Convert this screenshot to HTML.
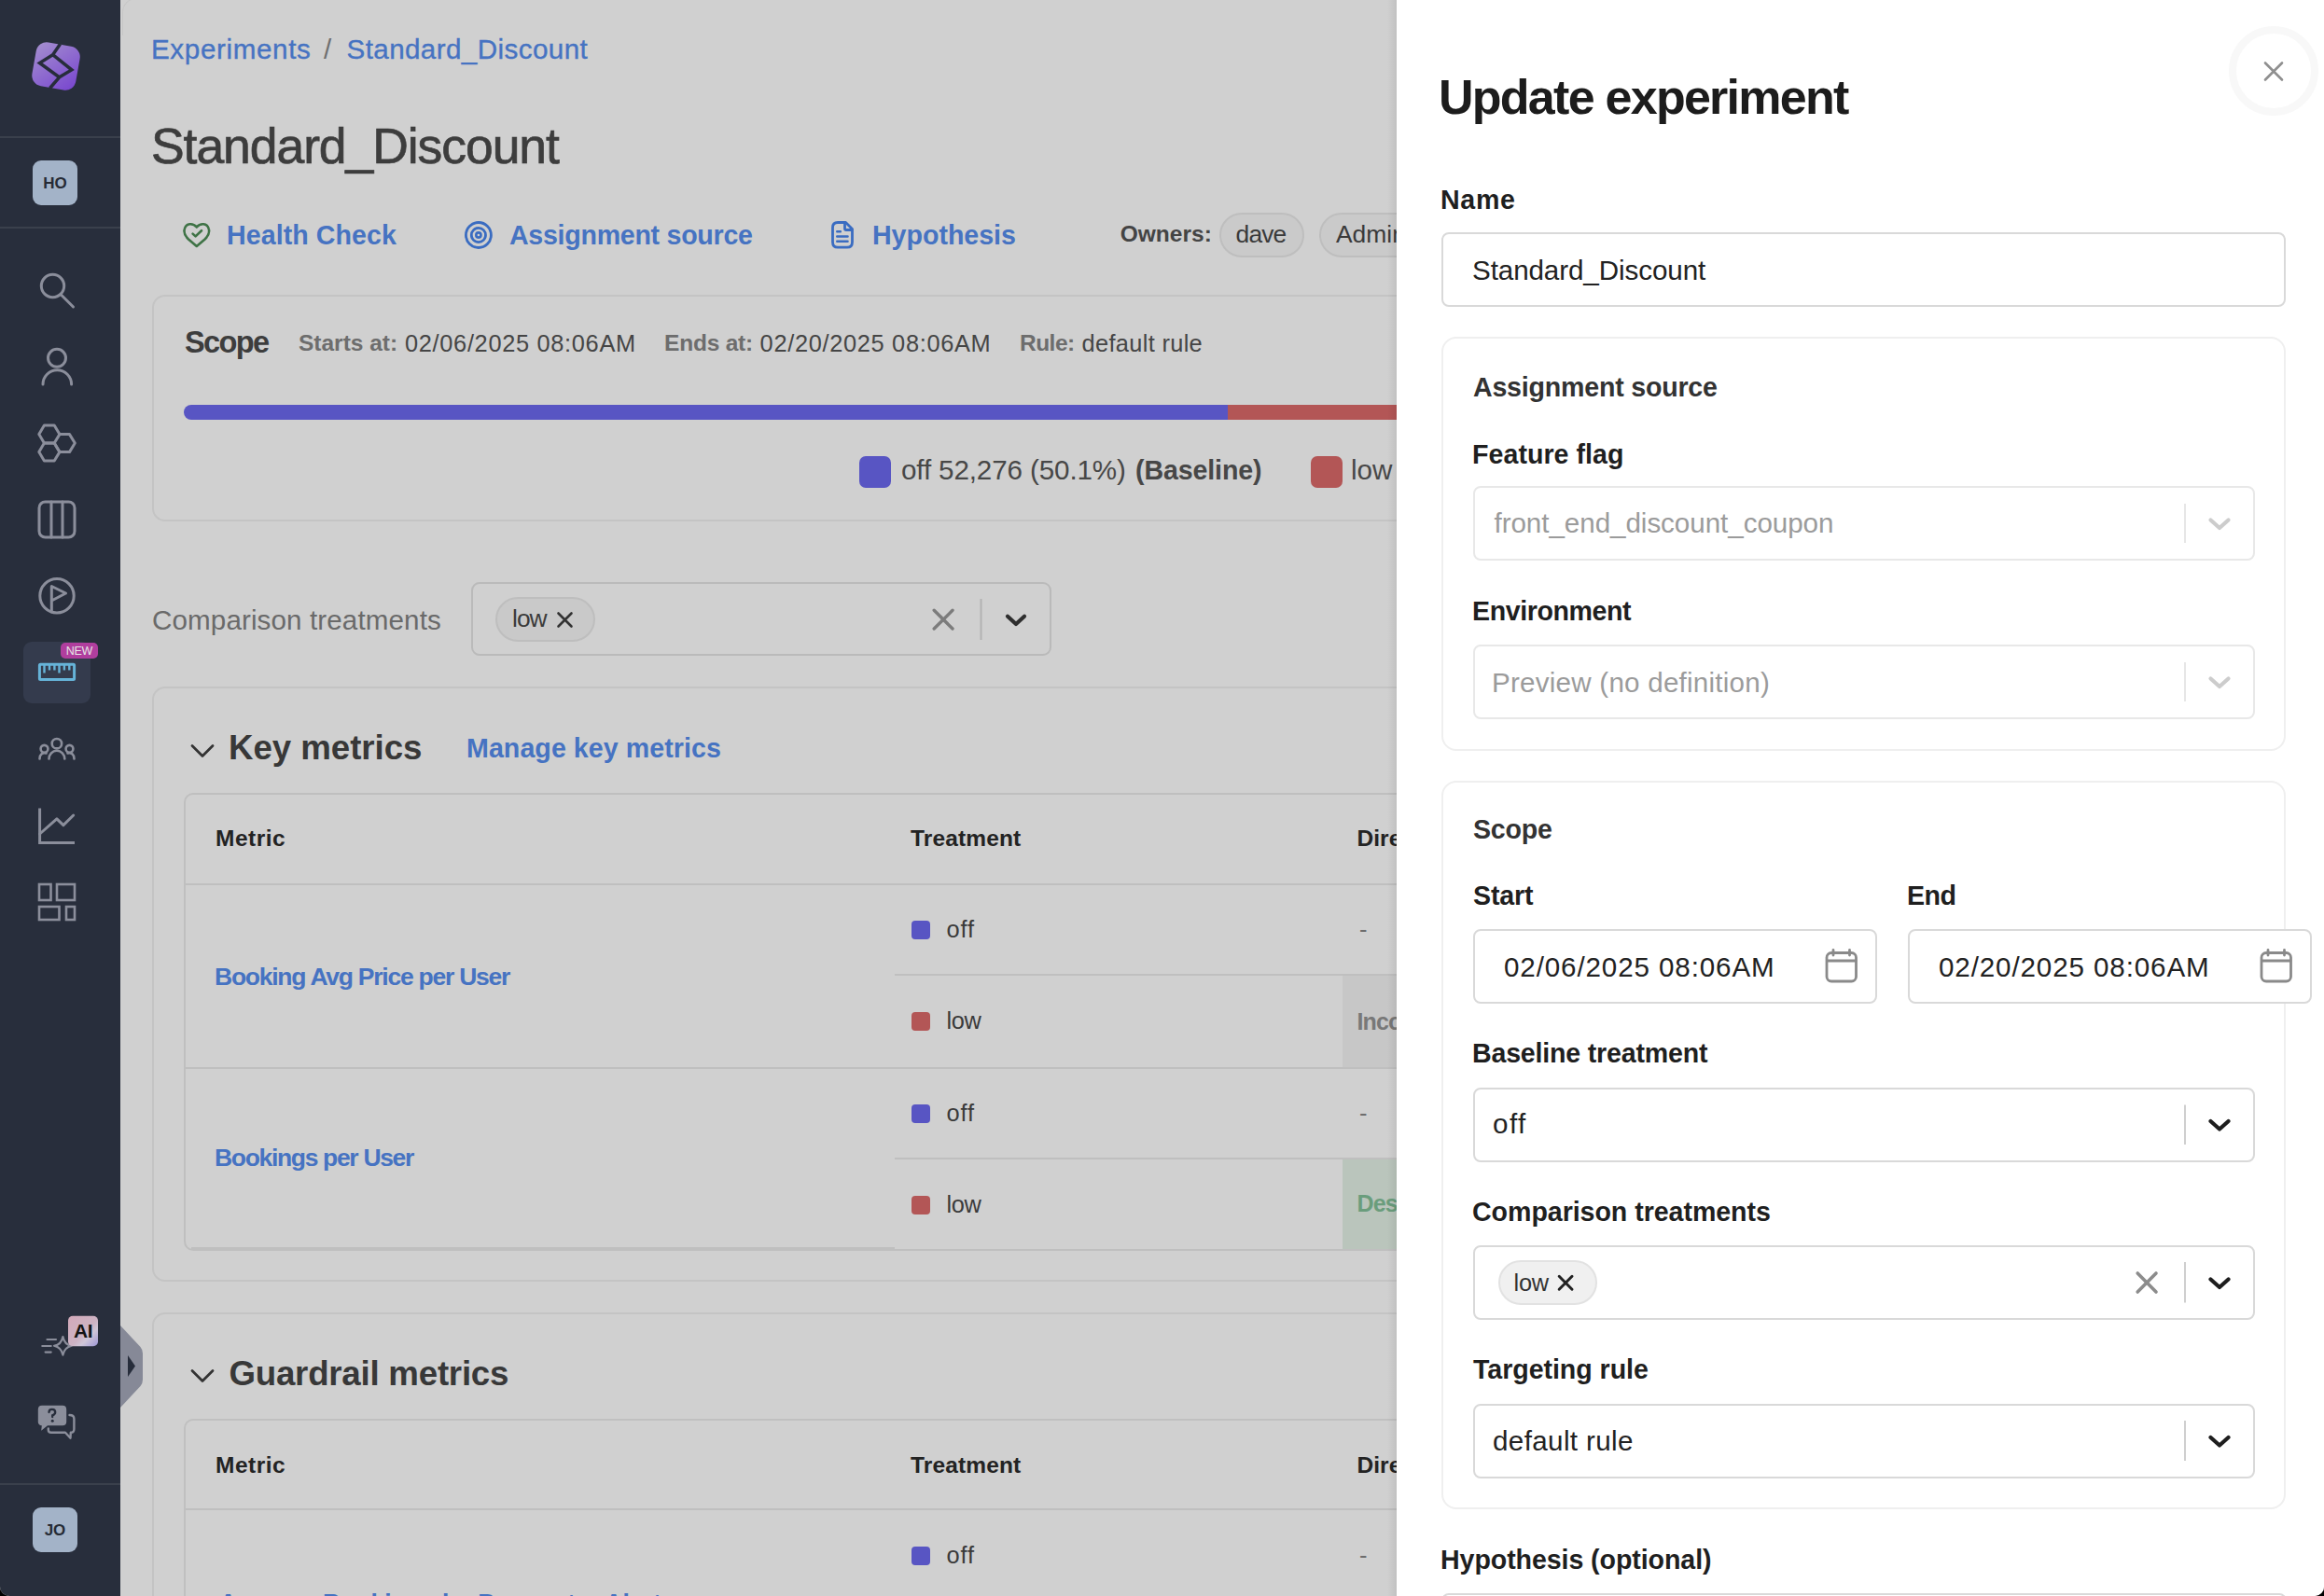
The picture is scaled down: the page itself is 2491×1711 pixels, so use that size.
<!DOCTYPE html>
<html><head><meta charset="utf-8"><title>Update experiment</title>
<style>
*{box-sizing:border-box;margin:0;padding:0}
html,body{width:2491px;height:1711px;overflow:hidden;background:#000;font-family:"Liberation Sans",sans-serif}
#app{position:absolute;left:0;top:0;width:2491px;height:1711px;overflow:hidden;border-radius:0 0 10px 10px;background:#d0d0d0}
.t{position:absolute;line-height:1;white-space:nowrap}
.abs{position:absolute}
#side{position:absolute;left:0;top:0;width:129px;height:1711px;background:#282e3c}
#main{position:absolute;left:129px;top:0;width:1368px;height:1711px;background:#d0d0d0;overflow:hidden}
#drawer{position:absolute;left:1497px;top:0;width:994px;height:1711px;background:#fff}
svg{position:absolute;overflow:visible}
.card{position:absolute;border:2px solid #c4c4c4;border-radius:14px}
.sel{position:absolute;border:2px solid #d9d9d9;border-radius:8px;background:#fff}
.dcard{position:absolute;border:2px solid #efefef;border-radius:16px}
</style></head>
<body><div id="app">
<!-- SIDEBAR -->
<div id="side">
  <div class="abs" style="left:0;top:146px;width:129px;height:2px;background:#3a404c"></div>
  <div class="abs" style="left:0;top:243px;width:129px;height:2px;background:#3a404c"></div>
  <div class="abs" style="left:0;top:1590px;width:129px;height:2px;background:#3a404c"></div>
  <!-- logo -->
  <svg style="left:0;top:0" width="129" height="130" viewBox="0 0 129 130">
    <defs><linearGradient id="lg" x1="0" y1="0" x2="1" y2="1"><stop offset="0" stop-color="#a590cf"/><stop offset="1" stop-color="#7744cf"/></linearGradient></defs>
    <rect x="36.2" y="47.2" width="47.6" height="47.6" rx="11.5" fill="url(#lg)" transform="rotate(10 60 71)"/>
    <path d="M64.5,47.3 L56.6,58.7 L42.5,67.5 L63.6,82.8 L53.5,94.5 M56.6,58.7 L76.8,74.9 L63.6,82.8" fill="none" stroke="#272d3b" stroke-width="3.5" stroke-linejoin="miter"/>
  </svg>
  <!-- HO -->
  <div class="abs" style="left:35px;top:172px;width:48px;height:48px;border-radius:9px;background:#a3b3c8"></div>
  <div class="t" style="left:35px;top:187.5px;width:48px;text-align:center;font-size:17px;font-weight:700;color:#262b35">HO</div>
  <!-- icons -->
  <svg style="left:0;top:0" width="129" height="1000" viewBox="0 0 129 1000" fill="none" stroke="#8b8e9b" stroke-width="3" stroke-linecap="round" stroke-linejoin="round">
    <circle cx="56.5" cy="306.5" r="12.2"/>
    <path d="M65.5,316 L78.5,329"/>
    <circle cx="61" cy="383.8" r="9.5"/>
    <path d="M46,412 A15.3,15.3 0 0 1 76.6,412"/>
    <path d="M47.4,456 L58.2,456 L63.9,465.6 L58.2,475 L47.4,475 L41.8,465.6 Z"/>
    <path d="M47.4,475 L58.2,475 L63.9,484.6 L58.2,494 L47.4,494 L41.8,484.6 Z"/>
    <path d="M63.9,465.6 L74.5,465.6 L80.3,475 L74.5,484.6 L63.9,484.6 L58.2,475"/>
    <rect x="42" y="538" width="38" height="38" rx="6.5"/>
    <path d="M55,538 V576 M67,538 V576"/>
    <circle cx="61" cy="638.8" r="18.2"/>
    <path d="M55.3,656 V628.5 L70.5,636 L55.3,644"/>
    <circle cx="60.9" cy="797.2" r="5.2" stroke-width="2.6"/>
    <path d="M52.5,813.5 A8.4,8.8 0 0 1 69.3,813.5" stroke-width="2.6"/>
    <circle cx="47.5" cy="802.8" r="3.9" stroke-width="2.6"/>
    <path d="M42.5,813.5 A5.2,6 0 0 1 49.5,807.5" stroke-width="2.6"/>
    <circle cx="74.5" cy="802.8" r="3.9" stroke-width="2.6"/>
    <path d="M79.5,813.5 A5.2,6 0 0 0 72.5,807.5" stroke-width="2.6"/>
    <path d="M42.6,866.5 V903.6 H80" stroke-linecap="butt" stroke-linejoin="miter"/>
    <path d="M42.6,894 L60.9,877.8 L67.9,884.6 L78.7,874"/>
    <rect x="42" y="948" width="12.5" height="17" stroke-width="2.6" stroke-linejoin="miter"/>
    <rect x="61" y="948" width="19" height="17" stroke-width="2.6" stroke-linejoin="miter"/>
    <rect x="42" y="972" width="21.5" height="14" stroke-width="2.6" stroke-linejoin="miter"/>
    <rect x="71" y="972" width="9" height="14" stroke-width="2.6" stroke-linejoin="miter"/>
  </svg>
  <!-- active ruler item -->
  <div class="abs" style="left:25px;top:688px;width:72px;height:66px;border-radius:9px;background:#343b4d"></div>
  <svg style="left:0;top:0" width="129" height="800" viewBox="0 0 129 800" fill="none" stroke="#66b3d8" stroke-width="3">
    <rect x="42.4" y="712.2" width="37.2" height="16.2" rx="1"/>
    <path d="M47.5,713 V721.5 M53,713 V718.5 M58.4,713 V718.5 M63.5,713 V721.5 M68.9,713 V718.5 M74.3,713 V718.5" stroke-width="2.4"/>
  </svg>
  <div class="abs" style="left:65px;top:689px;width:40px;height:16.5px;border-radius:5px;background:#b03e9e"></div>
  <div class="t" style="left:65px;top:691.5px;width:40px;text-align:center;font-size:12.5px;color:#e6e6e6;letter-spacing:-0.3px">NEW</div>
  <!-- AI -->
  <svg style="left:0;top:1400px" width="129" height="160" viewBox="0 1400 129 160" fill="none" stroke="#8b8e9b" stroke-width="2.2" stroke-linecap="round">
    <defs><linearGradient id="aig" x1="0" y1="0" x2="1" y2="1"><stop offset="0" stop-color="#d3a9b9"/><stop offset="0.55" stop-color="#cdb3c4"/><stop offset="0.7" stop-color="#cfc6d8"/><stop offset="1" stop-color="#9d96d6"/></linearGradient></defs>
    <path d="M50.5,1436 H60 M45.3,1443 H54.7 M48.6,1449.6 H54.7"/>
    <path d="M67.4,1433 Q69,1441.5 76.8,1442.8 Q69,1444.5 67.4,1452.6 Q65.8,1444.5 58,1442.8 Q65.8,1441.5 67.4,1433 Z" stroke-linejoin="round"/>
    <rect x="73" y="1410.8" width="32" height="32.4" rx="5" fill="url(#aig)" stroke="none"/>
    <path d="M40.8,1511 Q40.8,1506.7 45,1506.7 H67 Q71.2,1506.7 71.2,1511 V1524 Q71.2,1528.3 67,1528.3 H51 L44.2,1533.8 L44.8,1528.3 Q40.8,1528 40.8,1524 Z" fill="#8b8e9b" stroke="none"/>
    <path d="M74.5,1517 Q79.4,1517 79.4,1521 V1532 Q79.4,1535.8 75.8,1535.8 L75.5,1541.8 L70,1535.8 H55 Q51.8,1535.8 51.8,1533 V1531.5" stroke-width="2.4" stroke-linejoin="round"/>
    <path d="M52.5,1514 Q52.5,1510.8 55.8,1510.8 Q59.2,1510.8 59.2,1514 Q59.2,1516.2 56.2,1517.4 V1519" stroke="#272d3b" stroke-width="2.3"/>
    <circle cx="56.2" cy="1523.2" r="1.5" fill="#272d3b" stroke="none"/>
  </svg>
  <div class="t" style="left:73px;top:1416px;width:32px;text-align:center;font-size:21px;font-weight:700;color:#141414;letter-spacing:-0.5px">AI</div>
  <!-- JO -->
  <div class="abs" style="left:35px;top:1616px;width:48px;height:48px;border-radius:9px;background:#a3b3c8"></div>
  <div class="t" style="left:35px;top:1631.5px;width:48px;text-align:center;font-size:17px;font-weight:700;color:#262b35">JO</div>
</div>


<div id="main">
<div class="abs" style="left:0;top:0;width:1368px;height:1711px">
  <div class="abs" style="left:2px;top:-2px;width:40px;height:40px;border-left:1px solid #c6c6c6;border-top:1px solid #c6c6c6;border-top-left-radius:15px"></div>
</div>
</div>
<div class="abs" style="left:0;top:0;width:1497px;height:1711px;overflow:hidden">
<div class="t" id="bc1" style="left:162.00px;top:37.94px;font-size:29.6px;font-weight:400;color:#4673c2;letter-spacing:0.633px;-webkit-text-stroke:0.35px">Experiments</div>
<div class="t" id="bc2" style="left:347.00px;top:37.94px;font-size:29.6px;font-weight:400;color:#6f6f6f;letter-spacing:0.000px;">/</div>
<div class="t" id="bc3" style="left:371.50px;top:37.94px;font-size:29.6px;font-weight:400;color:#4673c2;letter-spacing:0.407px;-webkit-text-stroke:0.35px">Standard_Discount</div>
<div class="t" id="title" style="left:162.00px;top:129.71px;font-size:53.5px;font-weight:400;color:#3d3d3d;letter-spacing:-1.073px;-webkit-text-stroke:0.7px">Standard_Discount</div>
<div class="t" id="hc" style="left:243.00px;top:237.79px;font-size:28.6px;font-weight:700;color:#4673c2;letter-spacing:0.068px;">Health Check</div>
<div class="t" id="as" style="left:546.00px;top:237.79px;font-size:28.6px;font-weight:700;color:#4673c2;letter-spacing:-0.278px;">Assignment source</div>
<div class="t" id="hy" style="left:935.00px;top:237.79px;font-size:28.6px;font-weight:700;color:#4673c2;letter-spacing:-0.025px;">Hypothesis</div>
<div class="t" id="own" style="left:1200.70px;top:239.26px;font-size:24.5px;font-weight:700;color:#444444;letter-spacing:0.022px;">Owners:</div>
<!-- pills -->
<div class="abs" style="left:1307px;top:228px;width:91px;height:48px;border-radius:24px;border:2px solid #bebebe;background:#cacaca"></div>
<div class="abs" style="left:1414px;top:228px;width:120px;height:48px;border-radius:24px;border:2px solid #bebebe;background:#cacaca"></div>
<div class="t" id="dave" style="left:1324.60px;top:237.65px;font-size:26.4px;font-weight:400;color:#3a3a3a;letter-spacing:-0.850px;">dave</div>
<div class="t" id="admin" style="left:1432.00px;top:237.65px;font-size:26.4px;font-weight:400;color:#3a3a3a;letter-spacing:0.000px;">Admin</div>
<!-- header icons -->
<svg style="left:0;top:0" width="1000" height="300" viewBox="0 0 1000 300" fill="none" stroke-linecap="round" stroke-linejoin="round">
  <path d="M210.8,243.5 C207,239 199.5,238.8 197.8,245.5 C196.5,250 199,253.5 202,256.5 L210.8,264 L219.6,256.5 C222.6,253.5 225.1,250 223.8,245.5 C222.1,238.8 214.6,239 210.8,243.5 Z" stroke="#3f7346" stroke-width="2.6"/>
  <path d="M206.6,250.6 L209.6,253.4 L216,247.2" stroke="#3f7346" stroke-width="2.6"/>
  <circle cx="512.9" cy="252" r="13.5" stroke="#3a6cc1" stroke-width="2.8"/>
  <circle cx="512.9" cy="252" r="7.6" stroke="#3a6cc1" stroke-width="2.8"/>
  <circle cx="512.9" cy="252" r="2.6" stroke="#3a6cc1" stroke-width="2.6"/>
  <path d="M906.5,238.5 H898 Q892.5,238.5 892.5,244 V259.5 Q892.5,265.2 898,265.2 H908 Q913.5,265.2 913.5,259.5 V245.5 Z" stroke="#3a6cc1" stroke-width="2.8"/>
  <path d="M905.5,239 V245 Q905.5,246.5 907,246.5 H913" stroke="#3a6cc1" stroke-width="2.8"/>
  <path d="M897.3,248.2 H900.8 M897.3,253.5 H908.5 M897.3,258.8 H908.5" stroke="#3a6cc1" stroke-width="2.6"/>
</svg>
<!-- scope card -->
<div class="card" style="left:163px;top:316px;width:1500px;height:243px"></div>
<div class="t" id="sc" style="left:198.00px;top:351.40px;font-size:32.6px;font-weight:700;color:#3d3d3d;letter-spacing:-1.662px;">Scope</div>
<div class="t" id="sa" style="left:320.00px;top:356.26px;font-size:24.5px;font-weight:700;color:#6d6d6d;letter-spacing:-0.004px;">Starts at:</div>
<div class="t" id="sad" style="left:434.00px;top:355.50px;font-size:25.4px;font-weight:400;color:#454545;letter-spacing:0.670px;">02/06/2025 08:06AM</div>
<div class="t" id="ea" style="left:712.00px;top:356.26px;font-size:24.5px;font-weight:700;color:#6d6d6d;letter-spacing:-0.213px;">Ends at:</div>
<div class="t" id="ead" style="left:814.60px;top:355.50px;font-size:25.4px;font-weight:400;color:#454545;letter-spacing:0.670px;">02/20/2025 08:06AM</div>
<div class="t" id="ru" style="left:1093.00px;top:356.26px;font-size:24.5px;font-weight:700;color:#6d6d6d;letter-spacing:-0.523px;">Rule:</div>
<div class="t" id="rud" style="left:1159.60px;top:355.50px;font-size:25.4px;font-weight:400;color:#454545;letter-spacing:0.318px;">default rule</div>
<div class="abs" style="left:197px;top:434px;width:1119px;height:16px;border-radius:8px 0 0 8px;background:#5855c3"></div><div class="abs" style="left:1316px;top:434px;width:300px;height:16px;background:#b35656"></div>
<div class="abs" style="left:921px;top:489px;width:34px;height:34px;border-radius:7px;background:#5855c3"></div>
<div class="abs" style="left:1405px;top:489px;width:34px;height:34px;border-radius:7px;background:#b35656"></div>
<div class="t" id="lg1" style="left:966.00px;top:488.94px;font-size:29.6px;font-weight:400;color:#474747;letter-spacing:-0.123px;">off 52,276 (50.1%)</div>
<div class="t" id="lg2" style="left:1217.00px;top:489.79px;font-size:28.6px;font-weight:700;color:#474747;letter-spacing:-0.126px;">(Baseline)</div>
<div class="t" id="lg3" style="left:1448.00px;top:488.94px;font-size:29.6px;font-weight:400;color:#474747;letter-spacing:0.000px;">low</div>
<!-- comparison -->
<div class="t" id="ct" style="left:163.00px;top:649.94px;font-size:29.6px;font-weight:400;color:#6a6a6a;letter-spacing:0.111px;">Comparison treatments</div>
<div class="abs" style="left:505px;top:624px;width:622px;height:79px;border:2px solid #bababa;border-radius:9px"></div>
<div class="abs" style="left:531px;top:640px;width:107px;height:48px;border:2px solid #bebebe;border-radius:24px;background:#c9c9c9"></div>
<div class="t" id="ctchip" style="left:549.00px;top:649.65px;font-size:26.4px;font-weight:400;color:#3a3a3a;letter-spacing:-0.970px;">low</div>
<svg style="left:0;top:0" width="1200" height="720" viewBox="0 0 1200 720" fill="none" stroke-linecap="round">
  <path d="M598.5,657.5 L612.5,671.5 M612.5,657.5 L598.5,671.5" stroke="#333" stroke-width="2.6"/>
  <path d="M1001.2,654.3 L1021,674 M1021,654.3 L1001.2,674" stroke="#7c7c7c" stroke-width="3.4"/>
  <path d="M1051.5,642 V686" stroke="#b3b3b3" stroke-width="2" stroke-linecap="butt"/>
  <path d="M1080,660.7 L1089,669 L1098,660.7" stroke="#2e2e2e" stroke-width="4.2" stroke-linejoin="round"/>
</svg>
<!-- key metrics card -->
<div class="card" style="left:163px;top:736px;width:1500px;height:638px"></div>
<svg style="left:0;top:0" width="600" height="1500" viewBox="0 0 600 1500" fill="none" stroke="#333" stroke-width="2.8" stroke-linecap="round" stroke-linejoin="round">
  <path d="M206,799.5 L217,810.5 L228,799.5"/>
  <path d="M206,1469.5 L217,1480.5 L228,1469.5"/>
</svg>
<div class="t" id="km" style="left:245.00px;top:783.93px;font-size:36.7px;font-weight:700;color:#383838;letter-spacing:-0.061px;">Key metrics</div>
<div class="t" id="mkm" style="left:500.00px;top:787.79px;font-size:28.6px;font-weight:700;color:#4673c2;letter-spacing:0.066px;">Manage key metrics</div>
<div class="abs" style="left:197px;top:850px;width:1400px;height:491px;border:2px solid #bfbfbf;border-radius:10px"></div><div class="abs" style="left:205px;top:1337px;width:754px;height:2px;background:#bfbfbf"></div>
<div class="abs" style="left:199px;top:947px;width:1300px;height:2px;background:#bfbfbf"></div>
<div class="abs" style="left:1439px;top:1046px;width:60px;height:98px;background:#c7c7c7"></div>
<div class="abs" style="left:1439px;top:1243px;width:60px;height:96px;background:#bac5bc"></div>
<div class="abs" style="left:959px;top:1044px;width:540px;height:2px;background:#bfbfbf"></div>
<div class="abs" style="left:199px;top:1144px;width:1300px;height:2px;background:#bfbfbf"></div>
<div class="abs" style="left:959px;top:1241px;width:540px;height:2px;background:#bfbfbf"></div>
<div class="t" id="th1" style="left:231.00px;top:887.26px;font-size:24.5px;font-weight:700;color:#232323;letter-spacing:0.493px;">Metric</div>
<div class="t" id="th2" style="left:976.00px;top:887.26px;font-size:24.5px;font-weight:700;color:#232323;letter-spacing:0.133px;">Treatment</div>
<div class="t" id="th3" style="left:1454.60px;top:887.26px;font-size:24.5px;font-weight:700;color:#232323;letter-spacing:0.000px;">Direction</div>
<div class="t" id="r1off" style="left:1014.60px;top:983.50px;font-size:25.4px;font-weight:400;color:#3a3a3a;letter-spacing:0.842px;">off</div>
<div class="t" id="r1d" style="left:1457.00px;top:983.50px;font-size:25.4px;font-weight:400;color:#6d6d6d;letter-spacing:0.000px;">-</div>
<div class="t" id="r1low" style="left:1014.60px;top:1081.50px;font-size:25.4px;font-weight:400;color:#3a3a3a;letter-spacing:-0.381px;">low</div>
<div class="t" id="r1inc" style="left:1454.40px;top:1082.84px;font-size:25px;font-weight:700;color:#787878;letter-spacing:0.000px;letter-spacing:-0.8px">Inconclusive</div>
<div class="t" id="m1" style="left:230.00px;top:1033.57px;font-size:26.5px;font-weight:700;color:#4673c2;letter-spacing:-1.248px;">Booking Avg Price per User</div>
<div class="t" id="r2off" style="left:1014.60px;top:1180.50px;font-size:25.4px;font-weight:400;color:#3a3a3a;letter-spacing:0.842px;">off</div>
<div class="t" id="r2d" style="left:1457.00px;top:1180.50px;font-size:25.4px;font-weight:400;color:#6d6d6d;letter-spacing:0.000px;">-</div>
<div class="t" id="r2low" style="left:1014.60px;top:1278.50px;font-size:25.4px;font-weight:400;color:#3a3a3a;letter-spacing:-0.381px;">low</div>
<div class="t" id="r2des" style="left:1454.40px;top:1277.84px;font-size:25px;font-weight:700;color:#6a9d7c;letter-spacing:0.000px;letter-spacing:-0.8px">Desired</div>
<div class="t" id="m2" style="left:230.00px;top:1228.17px;font-size:26.5px;font-weight:700;color:#4673c2;letter-spacing:-1.331px;">Bookings per User</div>
<div class="abs" style="left:977px;top:987px;width:20px;height:20px;border-radius:4px;background:#5855c3"></div>
<div class="abs" style="left:977px;top:1085px;width:20px;height:20px;border-radius:4px;background:#b35656"></div>
<div class="abs" style="left:977px;top:1184px;width:20px;height:20px;border-radius:4px;background:#5855c3"></div>
<div class="abs" style="left:977px;top:1282px;width:20px;height:20px;border-radius:4px;background:#b35656"></div>
<!-- guardrail card -->
<div class="card" style="left:163px;top:1407px;width:1500px;height:600px"></div>
<div class="t" id="gm" style="left:245.50px;top:1454.93px;font-size:36.7px;font-weight:700;color:#383838;letter-spacing:-0.245px;">Guardrail metrics</div>
<div class="abs" style="left:197px;top:1521px;width:1400px;height:400px;border:2px solid #c0c0c0;border-radius:10px"></div>
<div class="abs" style="left:199px;top:1617px;width:1300px;height:2px;background:#bfbfbf"></div>
<div class="t" id="gth1" style="left:231.00px;top:1559.26px;font-size:24.5px;font-weight:700;color:#232323;letter-spacing:0.493px;">Metric</div>
<div class="t" id="gth2" style="left:976.00px;top:1559.26px;font-size:24.5px;font-weight:700;color:#232323;letter-spacing:0.133px;">Treatment</div>
<div class="t" id="gth3" style="left:1454.60px;top:1559.26px;font-size:24.5px;font-weight:700;color:#232323;letter-spacing:0.000px;">Direction</div>
<div class="t" id="g1off" style="left:1014.60px;top:1654.50px;font-size:25.4px;font-weight:400;color:#3a3a3a;letter-spacing:0.842px;">off</div>
<div class="t" id="g1d" style="left:1457.00px;top:1654.50px;font-size:25.4px;font-weight:400;color:#6d6d6d;letter-spacing:0.000px;">-</div>
<div class="t" id="g1m" style="left:235.00px;top:1704.57px;font-size:26.5px;font-weight:700;color:#4673c2;letter-spacing:0.000px;">Average Bookings by Parameter Alert</div>
<div class="abs" style="left:977px;top:1658px;width:20px;height:20px;border-radius:4px;background:#5855c3"></div>
</div>


<!-- collapse tab -->
<svg style="left:129px;top:1421px" width="26" height="90" viewBox="0 0 26 90">
  <path d="M0,0 L21.5,23 Q24,26 24,30 V58 Q24,62 21.5,65 L0,88 Z" fill="#868997"/>
  <path d="M8,32 L16,43.5 L8,55 Z" fill="#272d3b"/>
</svg>
<div id="drawer">
  <div class="abs" style="left:-10px;top:0;width:10px;height:1711px;background:linear-gradient(to right,rgba(0,0,0,0),rgba(0,0,0,0.07))"></div>
</div>
<div class="abs" style="left:1497px;top:0;width:994px;height:1711px;overflow:hidden">
<div class="abs" style="left:-1497px;top:0;width:2491px;height:1711px">
  <!-- close -->
  <div class="abs" style="left:2389px;top:28px;width:96px;height:96px;border-radius:50%;border:8px solid #f8f8f8"></div>
  <svg style="left:0;top:0" width="2491" height="1711" viewBox="0 0 2491 1711" fill="none" stroke-linecap="round" stroke-linejoin="round">
    <path d="M2428,67.5 L2446,85.5 M2446,67.5 L2428,85.5" stroke="#8f8f8f" stroke-width="2.6"/>
  </svg>
  <div class="t" id="ue" style="left:1542.00px;top:77.98px;font-size:52.0px;font-weight:700;color:#1c1c1c;letter-spacing:-1.738px;">Update experiment</div>
<div class="t" id="nm" style="left:1544.00px;top:199.79px;font-size:28.6px;font-weight:700;color:#1f1f1f;letter-spacing:0.675px;">Name</div>
  <div class="sel" style="left:1545px;top:249px;width:905px;height:80px"></div>
  <div class="t" id="nmv" style="left:1578.00px;top:274.94px;font-size:29.6px;font-weight:400;color:#222222;letter-spacing:-0.093px;">Standard_Discount</div>
  <!-- assignment card -->
  <div class="dcard" style="left:1545px;top:361px;width:905px;height:444px"></div>
  <div class="t" id="asl" style="left:1579.00px;top:400.79px;font-size:28.6px;font-weight:700;color:#333333;letter-spacing:-0.216px;">Assignment source</div>
<div class="t" id="ff" style="left:1578.00px;top:472.79px;font-size:28.6px;font-weight:700;color:#1f1f1f;letter-spacing:0.036px;">Feature flag</div>
<div class="t" id="env" style="left:1578.00px;top:640.79px;font-size:28.6px;font-weight:700;color:#1f1f1f;letter-spacing:-0.424px;">Environment</div>
  <div class="sel" style="left:1579px;top:521px;width:838px;height:80px;border-color:#e8e8e8"></div>
  <div class="sel" style="left:1579px;top:691px;width:838px;height:80px;border-color:#e8e8e8"></div>
  <div class="t" id="ffv" style="left:1601.50px;top:545.94px;font-size:29.6px;font-weight:400;color:#9b9b9b;letter-spacing:-0.055px;">front_end_discount_coupon</div>
<div class="t" id="envv" style="left:1599.00px;top:716.94px;font-size:29.6px;font-weight:400;color:#9b9b9b;letter-spacing:0.230px;">Preview (no definition)</div>
  <!-- scope card -->
  <div class="dcard" style="left:1545px;top:837px;width:905px;height:781px"></div>
  <div class="t" id="dsc" style="left:1579.00px;top:875.19px;font-size:28.6px;font-weight:700;color:#333333;letter-spacing:-0.227px;">Scope</div>
<div class="t" id="st" style="left:1579.00px;top:945.79px;font-size:28.6px;font-weight:700;color:#1f1f1f;letter-spacing:-0.156px;">Start</div>
<div class="t" id="en" style="left:2044.00px;top:945.79px;font-size:28.6px;font-weight:700;color:#1f1f1f;letter-spacing:-0.569px;">End</div>
  <div class="sel" style="left:1579px;top:996px;width:433px;height:80px"></div>
  <div class="sel" style="left:2045px;top:996px;width:433px;height:80px"></div>
  <div class="t" id="std" style="left:1612.00px;top:1021.94px;font-size:29.6px;font-weight:400;color:#222222;letter-spacing:0.875px;">02/06/2025 08:06AM</div>
<div class="t" id="end" style="left:2078.00px;top:1021.94px;font-size:29.6px;font-weight:400;color:#222222;letter-spacing:0.875px;">02/20/2025 08:06AM</div>
  <div class="t" id="bt" style="left:1578.00px;top:1115.49px;font-size:28.6px;font-weight:700;color:#1f1f1f;letter-spacing:-0.196px;">Baseline treatment</div>
  <div class="sel" style="left:1579px;top:1166px;width:838px;height:80px"></div>
  <div class="t" id="btv" style="left:1600.00px;top:1189.94px;font-size:29.6px;font-weight:400;color:#222222;letter-spacing:1.427px;">off</div>
  <div class="t" id="dct" style="left:1578.00px;top:1284.79px;font-size:28.6px;font-weight:700;color:#1f1f1f;letter-spacing:-0.053px;">Comparison treatments</div>
  <div class="sel" style="left:1579px;top:1335px;width:838px;height:80px"></div>
  <div class="abs" style="left:1605.5px;top:1351px;width:106px;height:48px;border-radius:24px;border:2px solid #e2e2e2;background:#f0f0f0"></div>
  <div class="t" id="dchip" style="left:1622.60px;top:1362.50px;font-size:25.4px;font-weight:400;color:#333333;letter-spacing:-0.281px;">low</div>
  <div class="t" id="tr" style="left:1579.00px;top:1453.79px;font-size:28.6px;font-weight:700;color:#1f1f1f;letter-spacing:-0.048px;">Targeting rule</div>
  <div class="sel" style="left:1579px;top:1505px;width:838px;height:80px"></div>
  <div class="t" id="trv" style="left:1600.00px;top:1529.54px;font-size:29.6px;font-weight:400;color:#222222;letter-spacing:0.367px;">default rule</div>
  <div class="t" id="hyo" style="left:1544.00px;top:1657.79px;font-size:28.6px;font-weight:700;color:#1f1f1f;letter-spacing:-0.088px;">Hypothesis (optional)</div>
  <div class="sel" style="left:1545px;top:1708px;width:906px;height:200px"></div>
  <svg style="left:0;top:0" width="2491" height="1711" viewBox="0 0 2491 1711" fill="none" stroke-linecap="round" stroke-linejoin="round">
    <!-- separators -->
    <path d="M2342,540 V582 M2342,710 V752" stroke="#e6e6e6" stroke-width="2" stroke-linecap="butt"/>
    <path d="M2342,1184.5 V1227 M2342,1353 V1396.5 M2342,1523 V1566" stroke="#cfcfcf" stroke-width="2" stroke-linecap="butt"/>
    <!-- chevrons -->
    <path d="M2369.5,557.5 L2379,566 L2388.5,557.5 M2369.5,727.5 L2379,736 L2388.5,727.5" stroke="#cccccc" stroke-width="4.2"/>
    <path d="M2369.5,1202 L2379,1210.5 L2388.5,1202 M2369.5,1371.5 L2379,1380 L2388.5,1371.5 M2369.5,1541 L2379,1549.5 L2388.5,1541" stroke="#1e1e1e" stroke-width="4.2"/>
    <!-- clear x -->
    <path d="M2291.2,1365 L2311,1385 M2311,1365 L2291.2,1385" stroke="#8c8c8c" stroke-width="3.6"/>
    <!-- chip x -->
    <path d="M1671.2,1368.3 L1685,1382.2 M1685,1368.3 L1671.2,1382.2" stroke="#222" stroke-width="3"/>
    <!-- calendars -->
    <g stroke="#8a8a8a" stroke-width="2.8">
      <rect x="1958" y="1021.5" width="31.5" height="30.5" rx="5"/>
      <path d="M1958.5,1030 H1989 M1965,1018.5 V1024 M1982.5,1018.5 V1024"/>
      <rect x="2424" y="1021.5" width="31.5" height="30.5" rx="5"/>
      <path d="M2424.5,1030 H2455 M2431,1018.5 V1024 M2448.5,1018.5 V1024"/>
    </g>
  </svg>
</div>
</div>

</div></body></html>
